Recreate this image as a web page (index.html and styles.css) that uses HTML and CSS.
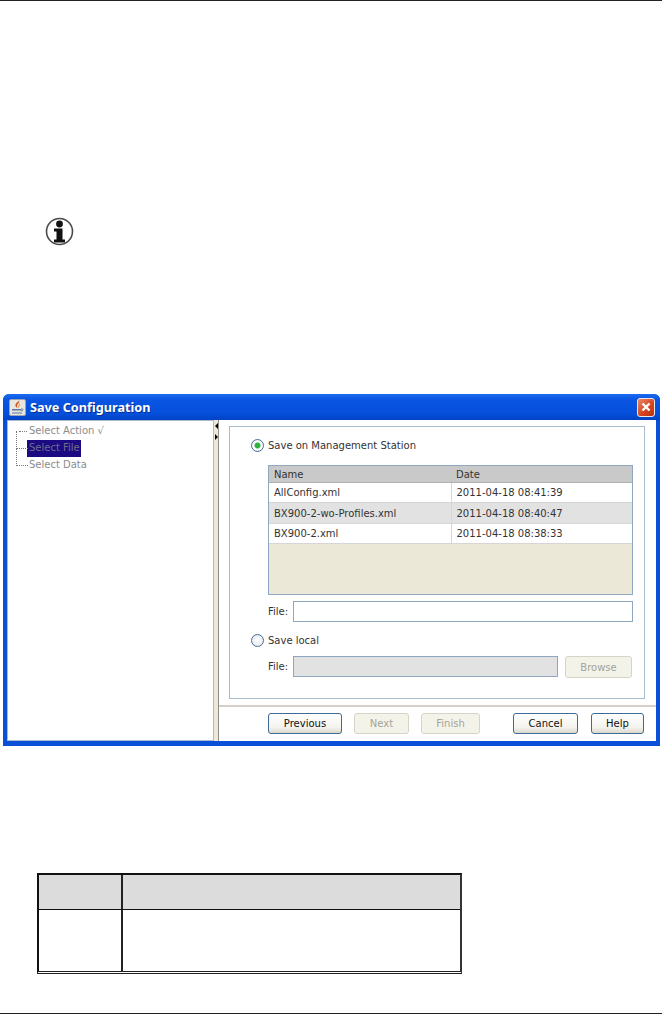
FILE: index.html
```html
<!DOCTYPE html>
<html lang="en">
<head>
    <title>Save Configuration</title>
    <link rel="stylesheet" href="styles.css">
</head>
<body>
    <div class="page">
        <svg class="note-icon" viewBox="0 0 29 29">
            <circle cx="14.5" cy="14.5" r="13" fill="#fff" stroke="#4a4a4a" stroke-width="1.6"/>
            <circle cx="14.5" cy="7" r="3.4" fill="#111"/>
            <path d="M9 11.5h8.5v11h2.5v3h-11v-3h2.5v-8h-2.5z" fill="#111"/>
        </svg>

        <div class="dialog">
            <div class="titlebar">
                <svg class="java-icon" viewBox="0 0 17 17">
                    <rect x="0.5" y="0.5" width="16" height="16" rx="1.5" fill="#e9e6dc" stroke="#9aa4b5"/>
                    <path d="M10 1.5c1.5 2.5-3.5 3.5-1.5 7.5-2-1-3-3-1-5 1-1 2-1.5 2.5-2.5z" fill="#d8501c"/>
                    <path d="M10 4c1 2-2 3-0.5 5 0-1.5 2.5-2.5 0.5-5z" fill="#e8801c"/>
                    <path d="M3 10h9v1.5H3z" fill="#5a78a8"/>
                    <path d="M12 10c2.5-0.5 3 1.5 0 2" fill="none" stroke="#5a78a8"/>
                    <path d="M3 13.5h10v1H3z" fill="#5a78a8"/>
                </svg>
                <span class="title">Save Configuration</span>
                <span class="close">
                    <svg viewBox="0 0 16 16"><path d="M4.5 4.5l7 7M11.5 4.5l-7 7" stroke="#fff" stroke-width="2.4"/></svg>
                </span>
            </div>
            <div class="client">
                <ul class="tree">
                    <li class="tree-item">Select Action √</li>
                    <li class="tree-item"><span class="selected">Select File</span></li>
                    <li class="tree-item">Select Data</li>
                </ul>
                <div class="splitter">
                    <span class="arrow-left"></span>
                    <span class="arrow-right"></span>
                </div>
                <div class="main">
                    <div class="group">
                        <div class="radio-row first">
                            <span class="radio checked"></span>
                            <span>Save on Management Station</span>
                        </div>
                        <div class="table-wrap">
                            <table class="files">
                                <thead>
                                    <tr><th class="name-col">Name</th><th>Date</th></tr>
                                </thead>
                                <tbody>
                                    <tr><td>AllConfig.xml</td><td>2011-04-18 08:41:39</td></tr>
                                    <tr class="alt"><td>BX900-2-wo-Profiles.xml</td><td>2011-04-18 08:40:47</td></tr>
                                    <tr><td>BX900-2.xml</td><td>2011-04-18 08:38:33</td></tr>
                                </tbody>
                            </table>
                        </div>
                        <div class="file-row top">
                            <span class="file-label">File:</span>
                            <div class="input"></div>
                        </div>
                        <div class="radio-row second">
                            <span class="radio"></span>
                            <span>Save local</span>
                        </div>
                        <div class="file-row bottom">
                            <span class="file-label">File:</span>
                            <div class="input disabled"></div>
                            <button class="btn browse" disabled>Browse</button>
                        </div>
                    </div>
                    <div class="footer">
                        <button class="btn previous">Previous</button>
                        <button class="btn next" disabled>Next</button>
                        <button class="btn finish" disabled>Finish</button>
                        <button class="btn cancel">Cancel</button>
                        <button class="btn help">Help</button>
                    </div>
                </div>
            </div>
        </div>

        <table class="doc-table">
            <tr class="doc-head"><td class="doc-first"></td><td></td></tr>
            <tr class="doc-body"><td class="doc-first"></td><td></td></tr>
        </table>
    </div>
</body>
</html>
```

FILE: styles.css
```css
body {
    margin: 0;
    background-color: #ffffff;
    font-family: "DejaVu Sans", sans-serif;
    font-size: 10px;
    color: #222222;
}

.page {
    box-sizing: border-box;
    height: 1014px;
    overflow: hidden;
    border-top: 1px solid #222222;
    border-bottom: 1px solid #222222;
    padding-top: 216px;
}

.note-icon {
    display: block;
    width: 29px;
    height: 29px;
    margin-left: 45px;
}

.dialog {
    box-sizing: border-box;
    width: 657px;
    height: 352px;
    margin-top: 148px;
    margin-left: 3px;
    border-radius: 6px 6px 0 0;
    background-color: #0a4fd8;
    display: flex;
    flex-direction: column;
}

.titlebar {
    height: 26px;
    display: flex;
    align-items: center;
    padding: 0 5px 0 6px;
    border-radius: 6px 6px 0 0;
    background: linear-gradient(#1c6bf0, #0a56e2 20%, #0450dc 75%, #0342c4);
}

.java-icon {
    width: 17px;
    height: 17px;
}

.title {
    margin-left: 4px;
    color: #ffffff;
    font-family: "Noto Sans", sans-serif;
    font-size: 12.7px;
    font-weight: bold;
    text-shadow: 1px 1px 0 #0a2f90;
}

.close {
    margin-left: auto;
    width: 16px;
    height: 17px;
    border-radius: 3px;
    border: 1px solid #e8e8e8;
    background: linear-gradient(135deg, #e8876a, #d4421c 60%, #b8330f);
}

.close svg {
    display: block;
    width: 16px;
    height: 16px;
}

.client {
    display: flex;
    height: 321px;
    margin: 0 4px 0 4px;
    background-color: #ffffff;
}

.tree {
    box-sizing: border-box;
    width: 207px;
    margin: 0;
    padding: 2px 0 0 21px;
    list-style: none;
    border: 1px solid #a9bccf;
    color: #8c8c8c;
}

.tree-item {
    position: relative;
    height: 17px;
    line-height: 16px;
}

.tree-item::before {
    content: "";
    position: absolute;
    left: -13px;
    top: -9px;
    width: 11px;
    height: 17px;
    border-left: 1px dotted #777777;
    border-bottom: 1px dotted #777777;
}

.tree-item:first-child::before {
    top: 8px;
    height: 0;
    border-left: 0;
    left: -10px;
    width: 8px;
}

.selected {
    display: inline-block;
    height: 17px;
    margin-left: -2px;
    padding: 0 1px 0 2px;
    background-color: #1c0a82;
    color: #6d6d8a;
}

.splitter {
    box-sizing: border-box;
    width: 5px;
    padding-top: 3px;
    background-color: #ece9d8;
    border-right: 1px solid #8e8e86;
    display: flex;
    flex-direction: column;
    gap: 5px;
}

.arrow-left,
.arrow-right {
    display: block;
    width: 0;
    height: 0;
    border-top: 3px solid transparent;
    border-bottom: 3px solid transparent;
}

.arrow-left {
    margin-left: 1px;
    border-right: 3px solid #000000;
}

.arrow-right {
    margin-left: 1px;
    border-left: 3px solid #000000;
}

.main {
    flex: 1;
    display: flex;
    flex-direction: column;
}

.group {
    box-sizing: border-box;
    height: 273px;
    margin: 6px 11px 0 10px;
    padding-left: 21px;
    border: 1px solid #a9bccf;
}

.radio-row {
    display: flex;
    align-items: center;
    gap: 4px;
    height: 13px;
    color: #333333;
}

.radio-row.first {
    margin-top: 12px;
}

.radio-row.second {
    margin-top: 12px;
}

.radio {
    box-sizing: border-box;
    width: 13px;
    height: 13px;
    border: 1px solid #4d6f94;
    border-radius: 50%;
    background: radial-gradient(#ffffff, #dde3ea);
}

.radio.checked {
    background: radial-gradient(#2fb33c 0, #2fb33c 2.5px, #ffffff 3.5px, #e4e8ec);
}

.table-wrap {
    box-sizing: border-box;
    width: 365px;
    height: 130px;
    margin-top: 13px;
    margin-left: 17px;
    background-color: #ebe8d8;
    border: 1px solid #8fa8c2;
}

.files {
    width: 100%;
    table-layout: fixed;
    border-collapse: collapse;
    color: #333333;
}

.files th {
    height: 16px;
    padding: 0 0 0 5px;
    background-color: #c9c9c9;
    border-bottom: 1px solid #b0b0b0;
    font-weight: normal;
    text-align: left;
}

.files th.name-col {
    width: 177px;
}

.files td {
    height: 19px;
    padding: 0 0 0 5px;
    background-color: #ffffff;
    border-bottom: 1px solid #d6d6d6;
}

.files td:first-child {
    border-right: 1px solid #d6d6d6;
}

.files .alt td {
    height: 20px;
    background-color: #e2e2e2;
}

.file-row {
    display: flex;
    align-items: center;
    height: 21px;
    margin-left: 17px;
}

.file-row.top {
    margin-top: 6px;
    width: 365px;
}

.file-row.bottom {
    margin-top: 9px;
    width: 364px;
}

.file-label {
    width: 25px;
    color: #333333;
}

.input {
    box-sizing: border-box;
    flex: 1;
    height: 21px;
    background-color: #ffffff;
    border: 1px solid #8fa8c2;
}

.input.disabled {
    background-color: #e2e2e2;
}

.btn {
    box-sizing: border-box;
    height: 21px;
    padding: 0;
    font-family: "DejaVu Sans", sans-serif;
    font-size: 10px;
    color: #111111;
    border: 1px solid #3d6a96;
    border-radius: 3px;
    background: linear-gradient(#ffffff, #f4f3ee 70%, #dcd8cc);
}

.btn:disabled {
    color: #a3a398;
    border-color: #d6d4c6;
    background: #f4f3ea;
}

.browse {
    width: 67px;
    height: 22px;
    margin-top: 1px;
    margin-left: 7px;
}

.footer {
    display: flex;
    margin-top: 6px;
    padding: 6px 0 0 49px;
    border-top: 2px solid #d4d0c6;
}

.previous {
    width: 74px;
}

.next {
    width: 55px;
    margin-left: 12px;
}

.finish {
    width: 59px;
    margin-left: 12px;
}

.cancel {
    width: 65px;
    margin-left: 33px;
}

.help {
    width: 53px;
    margin-left: 13px;
}

.doc-table {
    box-sizing: border-box;
    width: 425px;
    height: 101px;
    margin-top: 127px;
    margin-left: 37px;
    border-collapse: separate;
    border-spacing: 0;
    border: 2px solid #111111;
    border-right-color: #333333;
    border-bottom: 3px double #222222;
}

.doc-table td {
    padding: 0;
}

.doc-first {
    width: 82px;
    border-right: 2px solid #222222;
}

.doc-head td {
    height: 33px;
    background-color: #dcdcdc;
    border-bottom: 1px solid #111111;
}

.doc-body td {
    height: 60px;
    background-color: #ffffff;
}
```
